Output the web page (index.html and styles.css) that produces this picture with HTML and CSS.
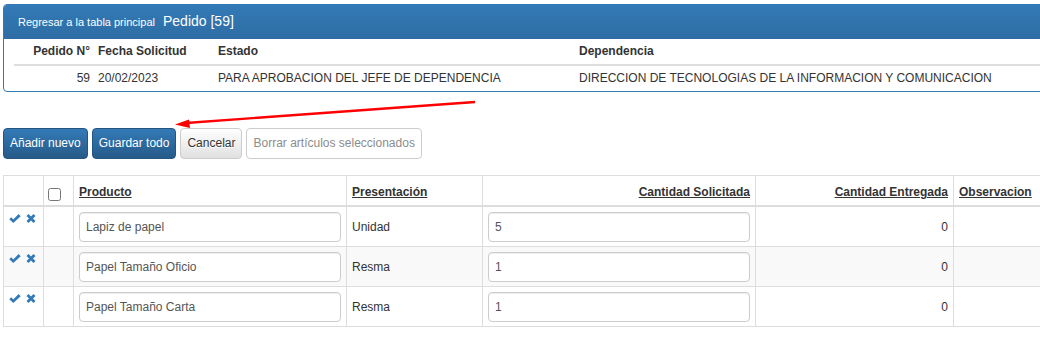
FILE: index.html
```html
<!DOCTYPE html>
<html lang="es">
<head>
  <meta charset="UTF-8" />
  <title>Pedido [59]</title>
  <link rel="stylesheet" href="styles.css">
</head>
<body>

  <div class="panel">
    <div class="panel-heading">
      <a href="#" class="back-link">Regresar a la tabla principal</a>
      <span class="panel-title">Pedido [59]</span>
    </div>
    <div class="panel-body">
      <table class="summary">
        <colgroup>
          <col style="width: 80px">
          <col style="width: 120px">
          <col style="width: 361px">
          <col>
        </colgroup>
        <thead>
          <tr>
            <th class="num">Pedido N°</th>
            <th>Fecha Solicitud</th>
            <th>Estado</th>
            <th>Dependencia</th>
          </tr>
        </thead>
        <tbody>
          <tr>
            <td class="num">59</td>
            <td>20/02/2023</td>
            <td>PARA APROBACION DEL JEFE DE DEPENDENCIA</td>
            <td>DIRECCION DE TECNOLOGIAS DE LA INFORMACION Y COMUNICACION</td>
          </tr>
        </tbody>
      </table>
    </div>
  </div>

  <div class="toolbar">
    <button class="btn btn-primary">Añadir nuevo</button>
    <button class="btn btn-primary">Guardar todo</button>
    <button class="btn btn-default">Cancelar</button>
    <button class="btn btn-disabled" disabled>Borrar artículos seleccionados</button>
  </div>

  <table class="grid">
    <colgroup>
      <col style="width: 40px">
      <col style="width: 30px">
      <col style="width: 273px">
      <col style="width: 136px">
      <col style="width: 273px">
      <col style="width: 198px">
      <col>
    </colgroup>
    <thead>
      <tr>
        <th></th>
        <th class="check-col"><input type="checkbox"></th>
        <th><a href="#">Producto</a></th>
        <th><a href="#">Presentación</a></th>
        <th class="num"><a href="#">Cantidad Solicitada</a></th>
        <th class="num"><a href="#">Cantidad Entregada</a></th>
        <th><a href="#">Observacion</a></th>
      </tr>
    </thead>
    <tbody>
      <tr>
        <td class="actions">
          <svg class="icon" viewBox="0 0 12 9" width="12" height="9"><path d="M0.3 5.2 L2.2 3.3 L4.3 5.4 L9.6 0.1 L11.7 2.2 L4.3 9 Z" fill="#337ab7"/></svg>
          <svg class="icon" viewBox="0 0 10 9" width="10" height="9"><path d="M1.5 1 L8.5 8 M8.5 1 L1.5 8" stroke="#337ab7" stroke-width="2.8"/></svg>
        </td>
        <td></td>
        <td><input type="text" class="form-control" value="Lapiz de papel"></td>
        <td>Unidad</td>
        <td><input type="text" class="form-control" value="5"></td>
        <td class="num">0</td>
        <td></td>
      </tr>
      <tr>
        <td class="actions">
          <svg class="icon" viewBox="0 0 12 9" width="12" height="9"><path d="M0.3 5.2 L2.2 3.3 L4.3 5.4 L9.6 0.1 L11.7 2.2 L4.3 9 Z" fill="#337ab7"/></svg>
          <svg class="icon" viewBox="0 0 10 9" width="10" height="9"><path d="M1.5 1 L8.5 8 M8.5 1 L1.5 8" stroke="#337ab7" stroke-width="2.8"/></svg>
        </td>
        <td></td>
        <td><input type="text" class="form-control" value="Papel Tamaño Oficio"></td>
        <td>Resma</td>
        <td><input type="text" class="form-control" value="1"></td>
        <td class="num">0</td>
        <td></td>
      </tr>
      <tr>
        <td class="actions">
          <svg class="icon" viewBox="0 0 12 9" width="12" height="9"><path d="M0.3 5.2 L2.2 3.3 L4.3 5.4 L9.6 0.1 L11.7 2.2 L4.3 9 Z" fill="#337ab7"/></svg>
          <svg class="icon" viewBox="0 0 10 9" width="10" height="9"><path d="M1.5 1 L8.5 8 M8.5 1 L1.5 8" stroke="#337ab7" stroke-width="2.8"/></svg>
        </td>
        <td></td>
        <td><input type="text" class="form-control" value="Papel Tamaño Carta"></td>
        <td>Resma</td>
        <td><input type="text" class="form-control" value="1"></td>
        <td class="num">0</td>
        <td></td>
      </tr>
    </tbody>
  </table>

  <svg class="arrow" width="1040" height="347" viewBox="0 0 1040 347">
    <line x1="475" y1="102" x2="186" y2="123" stroke="#f00" stroke-width="2.4"/>
    <path d="M175 124.5 L189 119.5 L190 128 Z" fill="#f00"/>
  </svg>

</body>
</html>
```

FILE: styles.css
```css
* {
  margin: 0;
  padding: 0;
  box-sizing: border-box;
}
html, body {
  overflow: hidden;
}
body {
  font-family: 'Liberation Sans', Arial, sans-serif;
  font-size: 12px;
  line-height: 17px;
  color: #333;
  background: #fff;
  padding: 4px 0 0 3px;
}
a {
  color: #333;
}

/* panel */
.panel {
  width: 1080px;
  border: 1px solid #337ab7;
  border-radius: 4px;
}
.panel-heading {
  display: flex;
  align-items: baseline;
  gap: 8px;
  height: 34px;
  padding: 8px 14px 0;
  background: linear-gradient(to bottom, #337ab7 0%, #2e6da4 100%);
  color: #fff;
  border-radius: 3px 3px 0 0;
}
.back-link {
  color: #fff;
  font-size: 11px;
  text-decoration: none;
}
.panel-title {
  font-size: 14px;
}
.panel-body {
  padding: 0 10px;
}
.summary {
  width: 100%;
  border-collapse: collapse;
  table-layout: fixed;
}
.summary th,
.summary td {
  padding: 4px;
  text-align: left;
  white-space: nowrap;
}
.summary th {
  border-bottom: 2px solid #ddd;
}
.summary .num {
  text-align: right;
}

/* buttons */
.toolbar {
  display: flex;
  gap: 4px;
  margin: 36px 0 16px;
}
.btn {
  font-family: inherit;
  font-size: 12px;
  line-height: 17px;
  padding: 6px 6px;
  border: 1px solid #ccc;
  border-radius: 4px;
  cursor: pointer;
}
.btn-primary {
  color: #fff;
  background: linear-gradient(to bottom, #337ab7 0%, #265a88 100%);
  border-color: #245580;
}
.btn-default {
  color: #333;
  background: linear-gradient(to bottom, #fff 0%, #e0e0e0 100%);
  border-color: #ccc;
  text-shadow: 0 1px 0 #fff;
}
.btn-disabled {
  color: #8c8c8c;
  background: #fff;
  border-color: #ccc;
  cursor: not-allowed;
}

/* grid */
.grid {
  width: 1080px;
  border-collapse: collapse;
  table-layout: fixed;
}
.grid th,
.grid td {
  border: 1px solid #ddd;
  text-align: left;
  white-space: nowrap;
}
.grid th {
  padding: 8px 5px 4px;
  border-bottom-width: 2px;
  vertical-align: bottom;
  font-weight: bold;
}
.grid td {
  padding: 5px 5px 4px;
  height: 40px;
  vertical-align: middle;
}
.grid tbody tr:nth-child(even) {
  background: #f9f9f9;
}
.grid .num {
  text-align: right;
}
.grid .check-col {
  padding-left: 4px;
}
.grid .check-col input {
  width: 13px;
  height: 13px;
  display: block;
}
.grid td.actions {
  vertical-align: top;
  padding: 7px 0 0 5px;
}
.icon {
  display: inline-block;
  vertical-align: top;
  margin-right: 2px;
}
.form-control {
  display: block;
  width: 100%;
  height: 30px;
  padding: 0 6px;
  font-family: inherit;
  font-size: 12px;
  color: #555;
  background: #fff;
  border: 1px solid #ccc;
  border-radius: 4px;
  box-shadow: inset 0 1px 1px rgba(0,0,0,0.075);
}

/* arrow annotation */
.arrow {
  position: absolute;
  left: 0;
  top: 0;
  pointer-events: none;
}
```
